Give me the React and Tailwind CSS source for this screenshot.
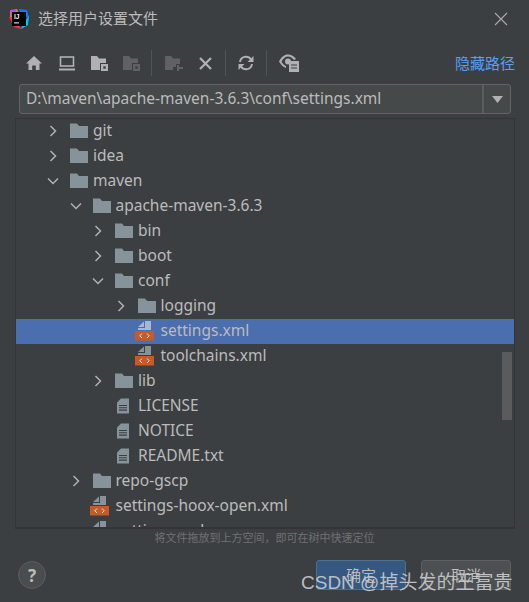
import React from "react";

const UI = { fontFamily: '"Noto Sans","Noto Sans CJK SC",sans-serif' };

const Chevron = ({ open }) => (
  <svg width="12" height="12" viewBox="0 0 12 12" fill="none" stroke="#afb1b3" strokeWidth="1.5">
    {open ? <path d="M1 3.5 L6 8.5 L11 3.5" /> : <path d="M3.5 1 L8.5 6 L3.5 11" />}
  </svg>
);

const Folder = () => (
  <svg width="18" height="15" viewBox="0 0 18 15">
    <path d="M0 0.5 H7 L9 3 H18 V15 H0 Z" fill="#87939a" />
  </svg>
);

const TextFile = () => (
  <svg width="14" height="16" viewBox="0 0 14 16">
    <path d="M5 0.5 H13 V15.5 H1 V4.5 Z" fill="#87939a" />
    <path d="M3 7.5 H11 M3 9.8 H11 M3 12.1 H11" stroke="#3c3f41" strokeWidth="1.1" />
  </svg>
);

const XmlFile = ({ selected }) => (
  <svg width="19" height="20" viewBox="0 0 19 20">
    <path d="M10 0 H16 V9 H3 V7 H10 Z" fill={selected ? "#a9b7d0" : "#87939a"} />
    <path d="M3 6 L9 0.5 V6 Z" fill={selected ? "#a9b7d0" : "#87939a"} />
    <rect x="0" y="10" width="19" height="9.5" fill="#c75a26" />
    <path d="M7 12.5 L4.8 14.8 L7 17 M12 12.5 L14.2 14.8 L12 17" fill="none" stroke="#e8e4de" strokeWidth="1" />
  </svg>
);

const rows = [
  { d: 0, t: "git", k: "c" },
  { d: 0, t: "idea", k: "c" },
  { d: 0, t: "maven", k: "o" },
  { d: 1, t: "apache-maven-3.6.3", k: "o" },
  { d: 2, t: "bin", k: "c" },
  { d: 2, t: "boot", k: "c" },
  { d: 2, t: "conf", k: "o" },
  { d: 3, t: "logging", k: "c" },
  { d: 3, t: "settings.xml", k: "x", sel: true },
  { d: 3, t: "toolchains.xml", k: "x" },
  { d: 2, t: "lib", k: "c" },
  { d: 2, t: "LICENSE", k: "f" },
  { d: 2, t: "NOTICE", k: "f" },
  { d: 2, t: "README.txt", k: "f" },
  { d: 1, t: "repo-gscp", k: "c" },
  { d: 1, t: "settings-hoox-open.xml", k: "x" },
  { d: 1, t: "settings.xml", k: "x" },
];

const indent = ["pl-[31px]", "pl-[53.5px]", "pl-[76px]", "pl-[98.5px]"];

const Row = ({ r }) => {
  const folder = r.k === "c" || r.k === "o";
  return (
    <div className={`h-[25px] shrink-0 flex items-center pb-[2px] text-[15.5px] text-[#bbbbbb] ${indent[r.d]} ${r.sel ? "bg-[#4b6eaf]" : ""}`}>
      <span className="w-[23px] shrink-0 flex items-center">
        {folder && <Chevron open={r.k === "o"} />}
      </span>
      <span className="w-[23px] shrink-0 flex items-center justify-start">
        {folder && <Folder />}
        {r.k === "x" && <span className="-ml-[3px] flex"><XmlFile selected={r.sel} /></span>}
        {r.k === "f" && <span className="ml-[1px] flex"><TextFile /></span>}
      </span>
      <span className="whitespace-nowrap leading-[23px]">{r.t}</span>
    </div>
  );
};

const Sep = () => <div className="w-px h-[26px] bg-[#515455] shrink-0" />;

const Tool = ({ w = "w-[32.5px]", children }) => (
  <div className={`${w} h-[26px] shrink-0 flex items-center justify-center`}>{children}</div>
);

const A = "#afb1b3";
const D = "#5f6162";

const IconFolderBadge = ({ c }) => (
  <svg width="17" height="16" viewBox="0 0 17 16">
    <path d="M0 1 H6 L8 3.5 H15 V8 H9 V15 H0 Z" fill={c} />
    <rect x="10" y="9" width="7" height="7" fill={c} />
    <rect x="12.3" y="11.3" width="2.4" height="2.4" fill="#3c3f41" />
  </svg>
);

export default function App() {
  return (
    <div style={UI} className="relative w-[529px] h-[602px] bg-[#3c3f41] overflow-hidden flex flex-col">
      <div className="h-[37px] shrink-0 flex items-center pl-[9px]">
        <svg width="20" height="20" viewBox="0 0 20 20">
          <path d="M1 2 L8 0 L10 4 L1 9 Z" fill="#f97a12" />
          <path d="M10 0 L18 1 L20 8 L13 9 Z" fill="#087cfa" />
          <path d="M0 8 L5 18 L12 20 L6 8 Z" fill="#fe2857" />
          <path d="M14 14 L20 7 L19 16 L12 20 Z" fill="#07c3f2" />
          <path d="M1 1 L8 0 L3 8 Z" fill="#b74af7" />
          <rect x="3" y="3" width="14" height="14" fill="#000000" />
          <text x="5" y="10" fontSize="6.5" fontWeight="700" fill="#ffffff" fontFamily='"Liberation Sans",sans-serif'>IJ</text>
          <rect x="5" y="13.4" width="5" height="1" fill="#ffffff" />
        </svg>
        <span className="ml-[9px] text-[15px] text-[#bbbbbb] leading-none">选择用户设置文件</span>
        <svg className="ml-auto mr-[21px]" width="14" height="14" viewBox="0 0 14 14" stroke="#a9abad" strokeWidth="1.1">
          <path d="M1 1 L13 13 M13 1 L1 13" />
        </svg>
      </div>

      <div className="h-[26px] mt-[13px] shrink-0 flex items-center pl-[18px] pr-[14px]">
        <Tool>
          <svg width="16" height="14" viewBox="0 0 16 14"><path d="M8 0 L16 7.5 H13.5 V14 H9.8 V9.5 H6.2 V14 H2.5 V7.5 H0 Z" fill={A} /></svg>
        </Tool>
        <Tool>
          <svg width="16" height="15" viewBox="0 0 16 15" fill="none" stroke={A}>
            <rect x="1.5" y="1" width="13" height="9" strokeWidth="1.6" />
            <path d="M0 13.5 H16" strokeWidth="2" />
          </svg>
        </Tool>
        <Tool><IconFolderBadge c={A} /></Tool>
        <Tool><IconFolderBadge c={D} /></Tool>
        <div className="w-[3px] shrink-0" />
        <Sep />
        <div className="w-[6px] shrink-0" />
        <Tool>
          <svg width="18" height="16" viewBox="0 0 18 16" fill={D}>
            <path d="M0 1 H6 L8 3.5 H15 V9 H11 V12 H8 V15 H0 Z" />
            <path d="M12 10 H14 V12 H18 V14 H14 V16 H12 Z" />
          </svg>
        </Tool>
        <Tool w="w-[30px]">
          <svg width="13" height="13" viewBox="0 0 13 13" stroke={A} strokeWidth="2.2"><path d="M1 1 L12 12 M12 1 L1 12" /></svg>
        </Tool>
        <div className="w-[4px] shrink-0" />
        <Sep />
        <Tool w="w-[40px]">
          <svg width="16" height="16" viewBox="0 0 16 16" fill="none" stroke={A} strokeWidth="2">
            <path d="M2 7 A6 6 0 0 1 13 4.5" />
            <path d="M14 9 A6 6 0 0 1 3 11.5" />
            <path d="M15.5 1 V7 H9.5 Z M0.5 15 V9 H6.5 Z" fill={A} stroke="none" />
          </svg>
        </Tool>
        <Sep />
        <Tool w="w-[45px]">
          <svg width="20" height="18" viewBox="0 0 20 18">
            <path d="M0 7.5 C3 2 6 0.5 9 0.5 C12 0.5 15 2 17 5 L15 6 C13 3.5 11 2.5 9 2.5 C6.5 2.5 4.5 4 2.5 7.5 C3.5 9.5 5 11 7 12 V14 C4 13 2 11 0 7.5 Z" fill={A} />
            <circle cx="9" cy="7.5" r="3" fill={A} />
            <rect x="10" y="7" width="10" height="11" fill={A} />
            <path d="M12 11 H18 M12 14 H18" stroke="#3c3f41" strokeWidth="1.2" />
          </svg>
        </Tool>
        <span className="ml-auto text-[15px] text-[#589df6] leading-none">隐藏路径</span>
      </div>

      <div className="mt-[8px] mx-[19px] mr-[18px] h-[30px] shrink-0 flex bg-[#45494a] border border-[#646464] rounded-[3px] text-[15.5px] text-[#bbbbbb]">
        <span className="flex-1 pl-[6px] leading-[27px] whitespace-nowrap">D:\maven\apache-maven-3.6.3\conf\settings.xml</span>
        <span className="w-[28px] border-l-2 border-[#5a5d5e] flex items-center justify-center">
          <svg width="11" height="7" viewBox="0 0 11 7"><path d="M0 0 H11 L5.5 7 Z" fill="#b0b2b4" /></svg>
        </span>
      </div>

      <div className="relative mt-[4px] ml-[15px] w-[500px] h-[411px] shrink-0 border-t border-l border-r border-b-2 border-[#323435] overflow-hidden flex flex-col">
        {rows.map((r, i) => <Row key={i} r={r} />)}
        <div className="absolute left-[486px] top-[233px] w-[10px] h-[68px] bg-[#595b5d]" />
      </div>

      <div className="h-[16px] shrink-0 flex items-center justify-center text-[11px] text-[#6f7173] leading-none">
        将文件拖放到上方空间，即可在树中快速定位
      </div>

      <div className="mt-[15px] shrink-0 flex items-center pl-[18px] pr-[18px]">
        <div className="w-[28px] h-[28px] rounded-full bg-[#4a4d4f] border border-[#5a5d5f] flex items-center justify-center text-[#bbbbbb] text-[17px] font-bold leading-none">?</div>
        <button className="ml-auto w-[90px] h-[30px] rounded-[3px] bg-[#365880] border border-[#4c708c] text-[15px] text-[#bbbbbb] leading-none">确定</button>
        <button className="ml-[15px] w-[90px] h-[30px] rounded-[3px] bg-[#4c5052] border border-[#5e6060] text-[15px] text-[#bbbbbb] leading-none">取消</button>
      </div>

      <div style={{ fontFamily: '"Liberation Sans","Noto Sans CJK SC",sans-serif' }} className="absolute left-[301px] top-[570px] text-[19px] leading-[26px] text-[#c9cacb] whitespace-nowrap opacity-90">
        CSDN @掉头发的王富贵
      </div>
    </div>
  );
}
